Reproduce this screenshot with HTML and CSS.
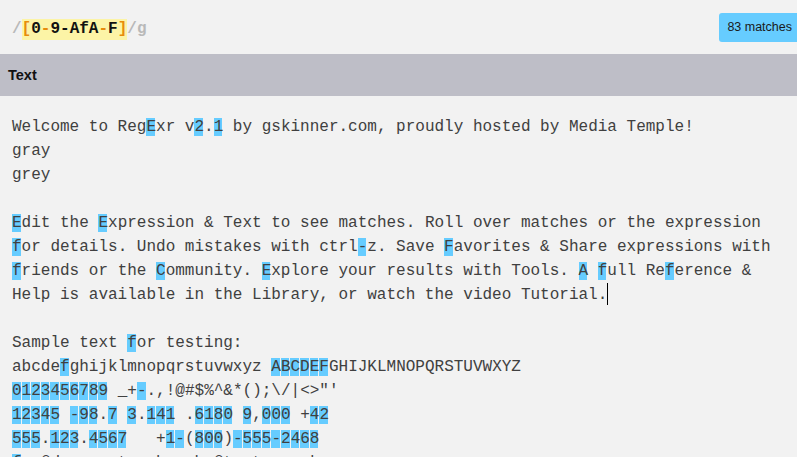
FILE: index.html
```html
<!DOCTYPE html>
<html>
<head>
<meta charset="utf-8">
<link rel="stylesheet" href="styles.css">
</head>
<body>
<header class="expr-bar">
  <div class="expr"><span class="delim">/</span><span class="set"><span class="br">[</span>0<span class="op">-</span>9-AfA<span class="op">-</span>F<span class="br">]</span></span><span class="delim">/g</span></div>
  <div class="badge">83 matches</div>
</header>
<div class="section-title">Text</div>
<div class="editor"><pre class="code">Welcome to Reg<i class="m">E</i>xr v<i class="m">2</i>.<i class="m">1</i> by gskinner.com, proudly hosted by Media Temple!
gray
grey

<i class="m">E</i>dit the <i class="m">E</i>xpression &amp; Text to see matches. Roll over matches or the expression
<i class="m">f</i>or details. Undo mistakes with ctrl<i class="m">-</i>z. Save <i class="m">F</i>avorites &amp; Share expressions with
<i class="m">f</i>riends or the <i class="m">C</i>ommunity. <i class="m">E</i>xplore your results with Tools. <i class="m">A</i> <i class="m">f</i>ull Re<i class="m">f</i>erence &amp;
Help is available in the Library, or watch the video Tutorial.<span class="caret"></span>

Sample text <i class="m">f</i>or testing:
abcde<i class="m">f</i>ghijklmnopqrstuvwxyz <i class="m">A</i><i class="m">B</i><i class="m">C</i><i class="m">D</i><i class="m">E</i><i class="m">F</i>GHIJKLMNOPQRSTUVWXYZ
<i class="m">0</i><i class="m">1</i><i class="m">2</i><i class="m">3</i><i class="m">4</i><i class="m">5</i><i class="m">6</i><i class="m">7</i><i class="m">8</i><i class="m">9</i> _+<i class="m">-</i>.,!@#$%^&amp;*();\/|&lt;&gt;"'
<i class="m">1</i><i class="m">2</i><i class="m">3</i><i class="m">4</i><i class="m">5</i> <i class="m">-</i><i class="m">9</i><i class="m">8</i>.<i class="m">7</i> <i class="m">3</i>.<i class="m">1</i><i class="m">4</i><i class="m">1</i> .<i class="m">6</i><i class="m">1</i><i class="m">8</i><i class="m">0</i> <i class="m">9</i>,<i class="m">0</i><i class="m">0</i><i class="m">0</i> +<i class="m">4</i><i class="m">2</i>
<i class="m">5</i><i class="m">5</i><i class="m">5</i>.<i class="m">1</i><i class="m">2</i><i class="m">3</i>.<i class="m">4</i><i class="m">5</i><i class="m">6</i><i class="m">7</i>   +<i class="m">1</i><i class="m">-</i>(<i class="m">8</i><i class="m">0</i><i class="m">0</i>)<i class="m">-</i><i class="m">5</i><i class="m">5</i><i class="m">5</i><i class="m">-</i><i class="m">2</i><i class="m">4</i><i class="m">6</i><i class="m">8</i>
<i class="m">f</i>oo@demo.net   bar.ba@test.co.uk</pre></div>
</body>
</html>
```
FILE: styles.css
```css
html, body {
  margin: 0;
  padding: 0;
}
body {
  width: 797px;
  height: 457px;
  overflow: hidden;
  background: #f2f2f2;
  font-family: "Liberation Sans", Arial, sans-serif;
}
.expr-bar {
  height: 54px;
  display: flex;
  align-items: center;
  justify-content: space-between;
  padding-left: 12px;
  box-sizing: border-box;
}
.expr {
  font-family: "Liberation Mono", "DejaVu Sans Mono", monospace;
  font-weight: bold;
  font-size: 16px;
  color: #111;
  display: flex;
  align-items: center;
  margin-top: 4px;
}
.delim {
  color: #b9b9b9;
}
.set {
  background: #fcf4a6;
  line-height: 21px;
  display: inline-block;
}
.br, .op {
  color: #e78c0b;
}
.badge {
  background: #66ccff;
  color: #1a1a1a;
  font-size: 12.5px;
  height: 29px;
  line-height: 29px;
  padding: 0 7px 0 8px;
  margin-right: -2px;
  margin-top: 1px;
  border-radius: 3px;
}
.section-title {
  background: #bebec7;
  height: 42px;
  line-height: 42px;
  padding-left: 8px;
  font-size: 14.5px;
  font-weight: bold;
  color: #111;
}
.editor {
  padding: 19px 12px 0 12px;
}
.code {
  margin: 0;
  font-family: "Liberation Mono", "DejaVu Sans Mono", monospace;
  font-size: 16px;
  line-height: 24px;
  color: #404040;
  white-space: pre;
}
.m {
  font-style: normal;
  background: #66ccff;
  box-shadow: inset -1px 0 0 #f2f2f2;
}
.caret {
  display: inline-block;
  width: 1px;
  height: 22px;
  background: #000;
  vertical-align: -6px;
}
```
